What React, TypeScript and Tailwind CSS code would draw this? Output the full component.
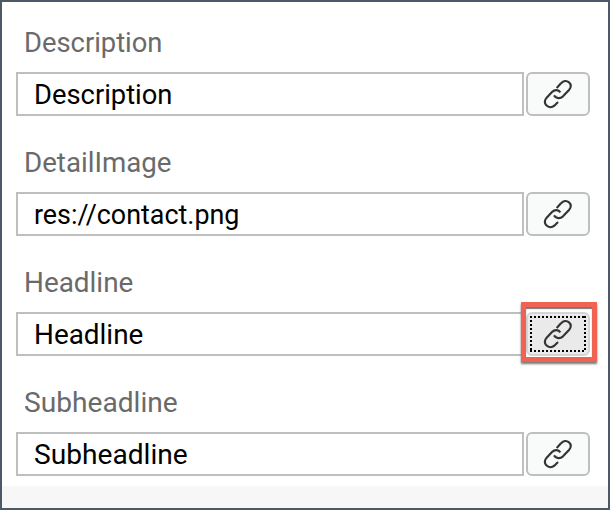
const fields = [
  { label: 'Description', value: 'Description', scale: 1.013 },
  { label: 'DetailImage', value: 'res://contact.png', scale: 1.025, valueScale: 0.996 },
  { label: 'Headline', value: 'Headline', scale: 1.033, focused: true },
  { label: 'Subheadline', value: 'Subheadline', scale: 1.042 },
];

function LinkIcon() {
  return (
    <svg className="size-[30px] shrink-0" viewBox="0 0 90 90" fill="none" stroke="#333" strokeWidth="6.4">
      <path d="M41 27 L54 13 C61 5 71 4 78 10 C85 16 85 25 78 33 L60 52 C51 60 39 59 33 49" />
      <path d="M52 40 C47 32 35 31 27 39 L11 56 C4 64 4 72 10 79 C17 86 27 86 34 80 L45 69" />
    </svg>
  );
}

function BindButton({ focused }: { focused?: boolean }) {
  return (
    <button
      className={`relative flex h-11 w-16 shrink-0 items-center justify-center rounded-[6px] border-2 ${
        focused ? 'border-[#d5d5d5] bg-[#eaeaea]' : 'border-[#bfbfbf] bg-[#f9fafa]'
      }`}
    >
      <LinkIcon />
      {focused && (
        <>
          <svg className="absolute left-[2px] top-[2px] h-9 w-14" viewBox="0 0 56 36" fill="none" stroke="#000" strokeWidth="2" strokeDasharray="2 2">
            <path d="M0 1H56M0 35H56M1 0V36M55 0V36" />
          </svg>
          <span className="absolute -left-[7px] -top-[12px] h-[60px] w-[76px] border-5 border-[#f06353] shadow-[0_2px_2px_#777,inset_0_2px_1px_#777]" />
        </>
      )}
    </button>
  );
}

export default function App() {
  return (
    <main className="flex h-[510px] w-[610px] flex-col overflow-hidden border-2 border-[#4c5a67] bg-white [font-family:Roboto,sans-serif] text-[27px]">
      <div className="h-[484px] shrink-0 pl-[14px]">
        {fields.map((field) => (
          <div key={field.label} className="h-[120px]">
            <div className="flex h-[70px] items-center pl-2 pt-[13px] text-[#6a6a6a]">
              <label className="origin-left leading-none" style={{ transform: `scaleX(${field.scale})` }}>{field.label}</label>
            </div>
            <div className="flex gap-[2px]">
              <div className="flex h-11 w-[508px] items-center border-2 border-[#bfbfbf] bg-white pl-4 pt-[2px] text-black">
                <span className="origin-left leading-none" style={{ transform: `scaleX(${field.valueScale ?? field.scale})` }}>{field.value}</span>
              </div>
              <BindButton focused={field.focused} />
            </div>
          </div>
        ))}
      </div>
      <footer className="flex-1 bg-[#f7f7f7]" />
    </main>
  );
}
